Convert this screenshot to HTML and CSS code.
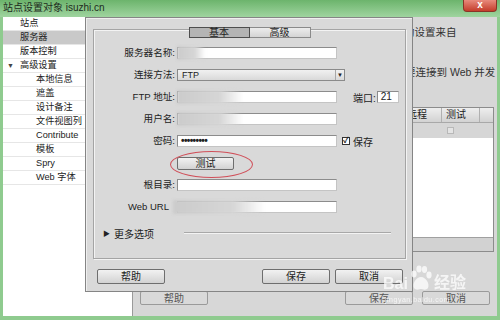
FILE: index.html
```html
<!DOCTYPE html>
<html lang="zh-CN">
<head>
  <meta charset="UTF-8" />
  <title>站点设置对象 isuzhi.cn</title>
  <link rel="stylesheet" href="styles.css">
</head>
<body>
  <div class="win">
    <div class="titlebar">
      <span class="title">站点设置对象 isuzhi.cn</span>
      <span class="close">x</span>
    </div>

    <div class="winbody">
      <ul class="nav">
        <li>站点</li>
        <li class="sel">服务器</li>
        <li>版本控制</li>
        <li class="grp"><span class="tri">▼</span>高级设置</li>
        <li class="sub">本地信息</li>
        <li class="sub">遮盖</li>
        <li class="sub">设计备注</li>
        <li class="sub">文件视图列</li>
        <li class="sub">Contribute</li>
        <li class="sub">模板</li>
        <li class="sub">Spry</li>
        <li class="sub">Web 字体</li>
      </ul>

      <div class="main">
        <div class="intro1">此对话框的设置来自</div>
        <div class="intro2">如果要连接到 Web 并发</div>
        <div class="tbl">
          <div class="thead"><span class="c1">远程</span><span class="c2">测试</span><span class="c3"></span></div>
          <div class="trow"><span class="c1"></span><span class="c2"><i class="minicb"></i></span><span class="c3"></span></div>
          <div class="tbody"></div>
          <div class="tscroll"></div>
        </div>
        <div class="mainbtns">
          <span class="btn ghost help">帮助</span>
          <span class="btn ghost save">保存</span>
          <span class="btn ghost">取消</span>
        </div>
      </div>
    </div>

    <!-- fenêtre au premier plan -->
    <div class="dlg">
      <div class="group">
        <div class="tabs">
          <span class="tab on">基本</span>
          <span class="tab">高级</span>
        </div>

        <div class="form">
          <label>服务器名称:</label>
          <div class="row"><div class="inp"><span class="blur b1"></span></div></div>

          <label>连接方法:</label>
          <div class="row"><div class="select"><span class="val">FTP</span><span class="arr">▼</span></div></div>

          <label>FTP 地址:</label>
          <div class="row">
            <div class="inp"><span class="blur b2"></span></div>
            <span class="port">端口:</span>
            <div class="inp small">21</div>
          </div>

          <label>用户名:</label>
          <div class="row"><div class="inp"><span class="blur b2"></span></div></div>

          <label>密码:</label>
          <div class="row">
            <div class="inp pwd">•••••••••</div>
            <span class="chk">✓</span><span class="chklbl">保存</span>
          </div>

          <label></label>
          <div class="row"><span class="btn test">测试</span></div>

          <label>根目录:</label>
          <div class="row"><div class="inp"></div></div>

          <label class="nocolon">Web URL</label>
          <div class="row"><div class="inp"><span class="blur b3"></span></div></div>
        </div>

        <div class="more">
          <span class="rtri">▶</span>
          <span>更多选项</span>
          <span class="rule"></span>
        </div>

        <div class="circle"></div>
      </div>

      <div class="btns">
        <span class="btn">帮助</span>
        <span class="btn push">保存</span>
        <span class="btn">取消</span>
      </div>
    </div>

    <div class="watermark">
      <span>Bai</span>
      <svg width="24" height="26" viewBox="0 0 24 26">
        <g fill="#fff">
          <ellipse cx="5" cy="9" rx="2.6" ry="3.4"/>
          <ellipse cx="10" cy="4" rx="2.6" ry="3.4"/>
          <ellipse cx="15.5" cy="4.5" rx="2.6" ry="3.4"/>
          <ellipse cx="20" cy="10" rx="2.6" ry="3.4"/>
          <path d="M12 12 C7 12 3 19 5 23 C7 26 11 24 12 24 C13 24 17 26 19 23 C21 19 17 12 12 12 Z"/>
        </g>
      </svg>
      <span>经验</span>
      <em>jingyan.baidu.com</em>
    </div>
  </div>
</body>
</html>
```

FILE: styles.css
```css
* { box-sizing: border-box; }
html, body {
  margin: 0; padding: 0;
  width: 500px; height: 320px; overflow: hidden;
}
body {
  font-family: "Liberation Sans", "Noto Sans CJK SC", sans-serif;
  font-size: 10px; color: #222;
}

.win {
  position: relative; width: 500px; height: 320px;
  background: #8fcb8f; padding: 0 3px 4px;
  display: flex; flex-direction: column;
}
.titlebar {
  height: 17px; margin: 0 -3px; padding-left: 3px;
  display: flex; align-items: flex-start;
  background: linear-gradient(#6cb46c, #9fd49f);
}
.title { line-height: 15px; font-size: 10px; color: #1d2b1d; }
.close {
  margin-left: auto; margin-right: 3px;
  width: 34px; height: 12px; line-height: 10px;
  text-align: center; color: #fff; font-weight: bold; font-size: 10px;
  background: linear-gradient(#e88a7c, #c43d2b);
  border: 1px solid #8a3326; border-top: none;
  border-radius: 0 0 4px 4px;
}

.winbody { flex: 1; display: flex; }
.nav {
  width: 130px; margin: 0; padding: 0; list-style: none;
  background: #fff; border-right: 1px solid #9a9a9a;
  font-size: 9.2px;
}
.nav li {
  height: 14px; line-height: 13px; padding-left: 17px;
  border-bottom: 1px solid #e6e6e6; white-space: nowrap;
}
.nav li.sel { background: #c9c9c9; }
.nav li.grp { padding-left: 4px; }
.nav li.sub { padding-left: 33px; }
.tri { display: inline-block; width: 13px; font-size: 7px; color: #444; }

.main {
  flex: 1; background: #d7d7d7;
  display: flex; flex-direction: column; overflow: hidden;
}
.intro1, .intro2 {
  line-height: 14px; font-size: 10.5px; white-space: nowrap; color: #333;
}
.intro1 { margin: 8px 0 0 229px; }
.intro2 { margin: 26px 0 0 251px; }

.tbl {
  margin: 28px 0 0 167px; width: 194px; height: 145px;
  border: 1px solid #8c8c8c; display: flex; flex-direction: column;
}
.thead, .trow { display: flex; }
.thead {
  height: 15px; line-height: 14px;
  background: linear-gradient(#eeeeee, #d2d2d2);
  border-bottom: 1px solid #a8a8a8;
}
.trow { height: 15px; background: #d6d6d6; }
.c1 { width: 141px; padding-left: 106px; border-right: 1px solid #b0b0b0; }
.c2 { width: 38px; padding-left: 4px; border-right: 1px solid #b0b0b0; }
.c3 { flex: 1; }
.trow .c1, .trow .c2 { border-right: none; }
.minicb {
  display: block; width: 7px; height: 7px; margin: 4px 0 0 1px;
  border: 1px solid #b8b8b8; background: #e4e4e4;
}
.tbody { flex: 1; background: #fff; }
.tscroll { height: 14px; background: #d2d2d2; border-top: 1px solid #a0a0a0; }

.mainbtns { display: flex; margin-top: 39px; }
.btn {
  display: inline-block; width: 68px; height: 15px; line-height: 13px;
  text-align: center; border: 1px solid #6e6e6e; border-radius: 2px;
  background: linear-gradient(#f2f2f2, #d2d2d2);
}
.btn.ghost { height: 14px; color: #555; border-color: #9a9a9a; background: #d9d9d9; }
.mainbtns .help { margin-left: 7px; }
.mainbtns .save { margin-left: 137px; }
.mainbtns .save + .btn { margin-left: 9px; }

/* dialogue */
.dlg {
  position: absolute; left: 85px; top: 17px;
  width: 328px; height: 275px;
  background: #d9d9d9; border: 1px solid #858585;
  box-shadow: inset 1px 1px 0 #efefef;
  display: flex; flex-direction: column;
}
.group {
  position: relative;
  margin: 11px 6px 0 7px; height: 230px;
  border: 1px solid #a4a4a4;
  box-shadow: inset 1px 1px 0 #f3f3f3, 1px 1px 0 #f3f3f3;
}
.tabs { display: flex; justify-content: center; margin-top: -3px; }
.tab {
  width: 61px; height: 11px; line-height: 9px; text-align: center;
  background: linear-gradient(#ececec, #d4d4d4);
  border: 1px solid #8a8a8a;
}
.tab.on { background: #b4b4b4; border-color: #4e4e4e; }
.tab + .tab { border-left: none; }

.form {
  display: grid; grid-template-columns: 81px 1fr;
  grid-auto-rows: 12px; row-gap: 10px; column-gap: 2px;
  margin-top: 9px;
}
.form label { text-align: right; line-height: 12px; white-space: nowrap; font-size: 9.6px; }
.form label.nocolon { padding-right: 6px; font-size: 9.5px; }
.row { display: flex; align-items: center; }
.inp {
  width: 160px; height: 12px; background: #fff;
  border: 1px solid #8c8c8c; border-right-color: #c4c4c4; border-bottom-color: #c4c4c4;
  display: flex; align-items: center; padding-left: 3px; line-height: 10px;
}
.inp.small { width: 22px; }
.inp.pwd { font-size: 10px; font-weight: bold; letter-spacing: -0.6px; }
.blur {
  display: block; height: 14px; margin-left: -4px; flex: none;
  background: linear-gradient(to right, #cbcbcb, #d6d6d6 65%, rgba(230,230,230,0));
  filter: blur(1.5px);
}
.blur.b1 { width: 28px; }
.blur.b2 { width: 66px; }
.blur.b3 { width: 92px; margin-left: -8px; }
.select {
  width: 168px; height: 12px; display: flex;
  border: 1px solid #8a8a8a; background: linear-gradient(#f1f1f1, #d9d9d9);
}
.select .val { flex: 1; padding-left: 4px; line-height: 10px; font-size: 9px; }
.select .arr {
  width: 9px; font-size: 6px; line-height: 10px; text-align: center;
  border-left: 1px solid #a8a8a8;
}
.port { margin: 0 1px 0 16px; }
.chk {
  width: 8px; height: 8px; margin-left: 5px;
  border: 1px solid #333; background: #fff;
  font-size: 8px; line-height: 6px; text-align: center; font-weight: bold;
}
.chklbl { margin-left: 3px; }
.btn.test { width: 57px; height: 13px; line-height: 11px; }

.more {
  display: flex; align-items: center; height: 14px;
  margin-top: 13px; padding-left: 9px;
}
.rtri { font-size: 7px; width: 11px; }
.rule {
  flex: 1; margin: 0 14px 0 30px; height: 2px;
  border-top: 1px solid #a8a8a8; border-bottom: 1px solid #f3f3f3;
}

.circle {
  position: absolute; left: 76px; top: 121px;
  width: 83px; height: 27px; border-radius: 50%;
  border: 1px solid #d0505a;
}

.btns { display: flex; gap: 5px; margin-top: 10px; padding: 0 9px 0 11px; }
.btns .push { margin-left: auto; }

.watermark {
  position: absolute; left: 383px; top: 265px;
  display: flex; align-items: flex-end; gap: 1px;
  color: #fff; font-size: 16px; font-weight: bold;
  opacity: 0.75;
}
.watermark svg { margin-bottom: 2px; }
.watermark em {
  position: absolute; left: 2px; top: 31px;
  font-size: 7px; font-style: normal; font-weight: normal; letter-spacing: 0.5px;
}
```
